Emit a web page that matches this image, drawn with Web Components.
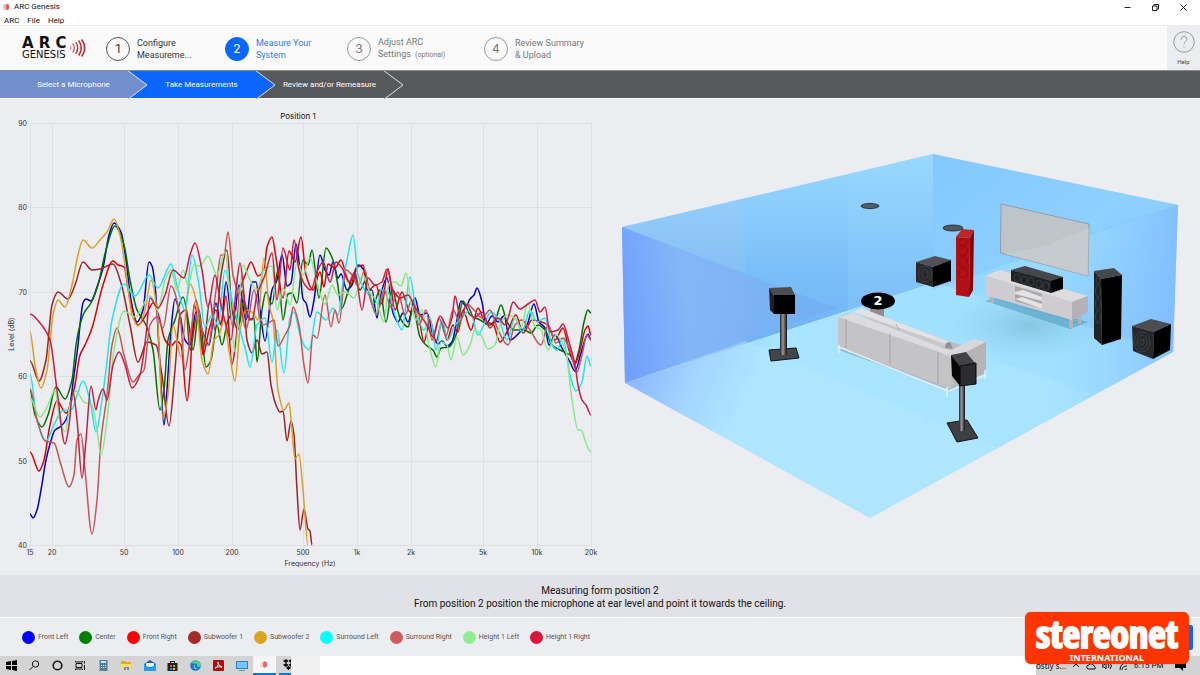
<!DOCTYPE html>
<html lang="en">
<head>
<meta charset="utf-8">
<meta name="viewport" content="width=device-width, initial-scale=1">
<title>ARC Genesis</title>
<style>
body { margin: 0; background: #fff; font-family: Roboto, "Liberation Sans", sans-serif; color: #222; }
</style>
</head>
<body>
<arc-app></arc-app>
<script>
const define = (name, html, setup) => customElements.define(name, class extends HTMLElement {
  constructor() {
    super();
    this.attachShadow({ mode: 'open' });
    const t = document.createElement('template');
    t.innerHTML = '<style>*{box-sizing:border-box}button{font:inherit;color:inherit;border:0;padding:0;margin:0;background:none}:host{display:block}</style>' + html;
    this.shadowRoot.append(t.content.cloneNode(true));
    if (setup) setup(this.shadowRoot, this);
  }
});

/* Window title and menu */
define('title-bar', `
<style>
:host { background: #fff; font-size: 8px; line-height: 12px; color: #111; }
.title { display: flex; align-items: center; height: 14px; padding: 0 3px; }
.title svg.app { margin-right: 4px; }
.title span { flex: 1; }
.title button { width: 28px; height: 14px; display: grid; place-items: center; }
nav { display: flex; gap: 8px; height: 12px; padding-left: 4px; border-bottom: 1px solid #ececec; }
nav button { line-height: 13px; height: 11px; }
</style>
<div class="title">
  <svg class="app" width="7" height="8" viewBox="0 0 7 8"><ellipse cx="3" cy="4" rx="3" ry="3" fill="#f2b5b5"/><ellipse cx="4.500" cy="4" rx="1.500" ry="3" fill="#d9585e"/></svg>
  <span>ARC Genesis</span>
  <button aria-label="Minimize"><svg width="9" height="9" viewBox="0 0 9 9"><path d="M1.500 4.500h6" stroke="#222"/></svg></button>
  <button aria-label="Restore"><svg width="9" height="9" viewBox="0 0 9 9" fill="none" stroke="#222"><path d="M1.500 3h4.500v4.500H1.500zM3 3V1.500h4.500V6H6"/></svg></button>
  <button aria-label="Close"><svg width="9" height="9" viewBox="0 0 9 9"><path d="M1.500 1.500l6 6M7.500 1.500l-6 6" stroke="#222"/></svg></button>
</div>
<nav><button>ARC</button><button>File</button><button>Help</button></nav>`);

define('arc-logo', `
<style>
:host { display: flex; align-items: center; color: #111; font-family: "DejaVu Sans", sans-serif; }
.words { display: grid; }
b { font-size: 15px; line-height: 13px; }
span { font-size: 10px; line-height: 10px; }
svg { margin-left: 2px; }
</style>
<div class="words"><b>A R C</b><span>GENESIS</span></div>
<svg width="17" height="20" viewBox="0 0 17 20" fill="none" stroke="#c9252c" stroke-linecap="round">
<path d="M1.500 8q1.500 2 0 4" stroke="#e07b80"/><path d="M4 6q2.500 4 0 8" stroke-width="1.200" stroke="#d5484e"/><path d="M7 4.500q3.500 5.500 0 11" stroke-width="1.300"/><path d="M10 3q4.500 7 0 14" stroke-width="1.500"/><path d="M13 2q5.500 8 0 16" stroke-width="1.600"/></svg>`);

define('step-item', `
<style>
button { display: flex; align-items: center; gap: 7px; text-align: left; font-size: 9px; line-height: 12px; color: #333; }
i { width: 24px; height: 24px; border: 1px solid #555; border-radius: 50%; display: grid; place-items: center; font: 12px Inter, sans-serif; flex: none; }
:host([todo]) button { color: #777; } :host([todo]) i { border-color: #999; }
:host([current]) button { color: #2e7bea; } :host([current]) i { background: #0a66ff; border-color: #0a66ff; color: #fff; }
</style>
<button><i></i><span><slot></slot></span></button>`, (r, el) => { r.querySelector('i').textContent = el.getAttribute('n'); });

define('step-header', `
<style>
:host { display: flex; height: 44px; background: #fafafa; align-items: center; }
arc-logo { width: 106px; padding-left: 22px; flex: none; }
.steps { flex: 1; display: grid; grid-template-columns: 119px 122px 137px auto; align-items: center; padding-top: 1px; }
small { font-size: 7px; margin-left: 2px; }
.help { width: 33px; height: 44px; background: #ecedf1; display: grid; justify-items: center; align-content: center; gap: 5px; font-size: 6px; line-height: 8px; color: #444; }
</style>
<arc-logo></arc-logo>
<div class="steps">
<step-item n="1">Configure<br>Measureme...</step-item>
<step-item n="2" current>Measure Your<br>System</step-item>
<step-item n="3" todo>Adjust ARC<br>Settings <small>(optional)</small></step-item>
<step-item n="4" todo>Review Summary<br>&amp; Upload</step-item>
</div>
<button class="help"><svg width="22" height="22" viewBox="0 0 22 22" fill="none" stroke="#999"><circle cx="11" cy="11" r="10.300"/><path d="M8.200 8.600q0-3.200 2.900-3.200t2.800 2.800q0 1.500-1.500 2.500T11 13.300"/><path d="M11 15.200v1.400"/></svg>Help</button>`);

define('crumb-step', `
<style>
:host { position: relative; flex: none; width: 128px; color: #fff; }
button { width: 100%; height: 100%; padding-left: 19px; background: var(--c); font-size: 8px; white-space: nowrap; }
svg { position: absolute; left: 128px; top: 0; z-index: 1; }
path { fill: var(--c); stroke: #dfe3ea; }
</style>
<button><slot></slot></button><svg width="20" height="28" viewBox="0 0 20 28"><path d="M-1 -1L19 14L-1 29"/></svg>`);

define('crumb-nav', `
<style>
:host { display: flex; height: 29px; background: #58595b; border-bottom: 1px solid #fff; border-top: 1px solid #8a8b8d; }
crumb-step:nth-of-type(1) { --c: #708fcb; z-index: 3; }
crumb-step:nth-of-type(2) { --c: #0a66ff; z-index: 2; }
crumb-step:nth-of-type(3) { --c: #58595b; z-index: 1; }
</style>
<crumb-step>Select a Microphone</crumb-step><crumb-step>Take Measurements</crumb-step><crumb-step>Review and/or Remeasure</crumb-step>`);

/* Frequency response plot: every trace is a list of x,y pairs in plot units */
const traces = [
['#0000c8','30,514 33,518 37,510 41,490 46,460 50,444 55,430 60,427 66,420 70,405 74,375 78,345 80,325 83,303 86,299 91,301 97,287 103,268 109,235 114,223 121,232 126,260 131,300 137,322 143,310 149,262 152,266 155,285 160,365 164,425 167,390 171,330 175,299 180,315 185,340 190,345 196,312 202,330 209,345 216,303 221,325 226,282 233,327 239,285 246,320 252,282 256,282 260,310 265,341 272,290 277,280 282,255 287,286 291,283 296,244 300,270 303,299 306,303 310,317 314,300 320,255 325,270 329,275 333,262 338,278 341,274 347,290 352,285 358,265 364,270 367,290 372,290 377,318 380,298 387,278 393,313 398,322 403,313 408,322 415,298 420,315 427,313 433,335 438,344 442,341 447,346 452,342 457,320 461,301 466,306 470,299 474,295 477,288 482,302 486,324 492,316 498,322 504,316 510,340 520,332 527,325 534,304 539,322 545,328 549,345 555,335 562,348 570,362 575,371 581,353 586,337 588,334 591,340'],
['#007000','30,390 35,415 42,427 48,415 56,387 65,399 72,380 76,345 80,325 84,313 91,303 98,285 106,250 115,226 124,245 130,280 137,310 146,325 153,350 160,410 164,390 168,340 175,320 183,297 189,325 193,350 199,310 206,367 211,360 217,325 222,345 228,320 234,312 239,325 244,300 249,320 254,318 257,362 262,310 266,292 272,304 278,270 283,320 288,294 292,293 297,303 303,260 308,265 312,250 319,298 326,248 333,260 337,280 342,308 347,295 354,275 360,290 366,280 373,305 380,290 386,322 392,290 400,318 408,327 413,308 420,337 426,345 433,350 437,357 441,348 449,347 456,335 463,301 470,315 480,320 490,325 496,318 501,305 507,322 514,330 524,330 531,333 538,325 545,330 552,345 560,350 570,355 575,362 579,350 584,322 588,310 591,313'],
['#e00000','30,452 39,471 44,460 50,425 57,401 66,413 74,390 80,355 85,345 92,328 103,285 113,261 118,265 124,267 130,300 138,325 147,313 153,303 159,317 165,340 171,346 176,341 181,345 187,401 190,375 194,305 200,330 203,355 209,330 216,310 221,325 226,296 232,364 236,340 240,290 246,273 251,262 258,276 264,270 267,247 272,237 276,258 283,298 289,251 295,262 301,237 306,275 313,290 320,272 324,287 328,264 335,268 341,260 347,278 351,285 356,268 363,265 368,290 376,285 382,304 388,269 395,310 402,292 410,312 417,310 424,342 430,320 436,342 442,322 447,340 453,325 458,332 463,310 471,330 478,308 485,322 493,324 500,342 508,330 516,315 523,333 532,320 541,322 548,325 555,340 563,328 569,350 575,364 580,350 585,330 588,326 591,335'],
['#9c2424','30,361 39,381 46,360 52,305 58,292 68,299 75,285 83,262 92,270 100,269 113,264 121,283 130,325 138,362 147,342 156,345 162,375 169,426 175,370 180,315 186,310 190,350 197,315 203,350 210,300 215,330 221,275 227,250 232,310 238,330 243,290 247,340 252,353 257,340 262,354 267,352 271,385 276,405 280,412 283,411 287,441 291,421 294,435 297,490 300,530 304,509 308,529 310,531 312,545'],
['#d9a028','30,332 35,365 41,388 47,370 53,315 58,300 65,307 72,285 78,255 83,240 92,248 100,240 107,232 114,219 120,235 127,280 132,315 138,326 145,310 151,280 157,310 163,419 168,395 173,325 181,357 187,300 190,284 196,300 202,360 208,374 214,340 219,335 224,320 229,350 235,381 240,330 246,310 252,312 258,320 264,258 269,305 273,320 278,390 284,410 289,403 292,430 295,459 299,454 303,490 308,545'],
['#20e4f0','30,374 37,420 46,441 54,425 62,411 72,409 77,395 83,381 90,400 96,432 102,400 106,370 112,320 124,284 135,296 149,275 158,288 171,264 178,290 185,310 192,255 199,285 205,327 212,315 218,325 225,270 232,300 240,330 246,352 250,367 257,325 265,318 272,362 277,330 284,373 290,318 294,312 300,335 304,345 309,350 317,312 326,320 333,308 338,315 343,282 348,255 353,235 358,275 365,290 371,298 376,315 381,290 388,292 395,315 402,330 410,277 416,310 424,330 430,318 436,350 442,320 448,340 455,325 462,318 470,310 478,335 485,322 491,312 499,320 507,340 515,318 522,332 530,310 537,322 545,318 552,345 557,350 563,338 570,375 576,391 582,382 587,356 591,366'],
['#c45656','30,389 37,420 45,441 54,443 61,465 69,487 74,475 77,440 81,434 85,470 92,534 97,500 101,440 107,395 112,345 117,328 124,355 133,382 139,375 144,370 150,325 157,317 163,328 171,286 180,315 185,370 190,340 196,300 202,330 208,345 216,290 221,255 224,255 228,232 233,275 240,300 246,330 254,290 262,325 270,322 274,320 278,346 285,335 290,325 293,307 299,325 304,365 308,383 313,335 317,338 325,295 331,327 335,310 339,323 346,270 352,275 358,286 365,270 370,298 377,315 384,290 391,307 398,292 405,315 412,300 419,325 426,310 432,340 439,318 446,336 453,310 460,322 467,304 474,310 482,318 490,310 498,330 508,345 515,325 522,320 530,330 541,345 548,325 556,343 563,338 570,350 577,372 582,355 587,335 591,340'],
['#88e888','30,398 40,417 48,405 55,390 60,420 65,432 70,405 76,391 84,402 92,405 97,430 101,455 107,420 114,350 124,311 135,317 150,296 158,310 165,280 171,270 177,290 183,270 188,285 194,265 200,266 208,256 217,275 225,252 231,310 235,352 243,265 250,280 257,290 264,270 272,266 277,310 283,288 290,305 297,262 303,275 310,258 318,287 325,304 332,285 338,295 345,292 354,298 363,275 370,293 376,300 384,322 389,283 395,282 401,286 406,273 411,302 416,320 422,310 429,345 436,367 441,342 447,345 451,360 457,337 463,355 470,345 475,330 481,335 488,349 495,345 500,325 507,315 515,318 521,328 528,303 534,325 541,330 548,350 556,335 566,352 572,400 578,430 581,430 586,443 591,452'],
['#cc1c40','30,314 40,323 50,340 57,390 65,444 69,425 73,392 77,420 82,478 86,440 91,386 96,410 98,401 103,389 107,400 113,365 119,352 125,365 132,388 140,375 146,335 150,298 158,308 165,295 173,270 184,278 190,255 195,243 202,270 208,307 215,275 220,300 226,325 231,340 236,290 240,263 246,310 252,320 257,295 265,275 272,253 277,300 283,248 290,270 294,240 299,270 305,285 311,290 317,272 323,262 330,282 336,262 342,268 349,282 355,272 362,310 368,278 375,285 382,282 387,269 393,290 400,298 408,295 415,307 420,315 427,325 433,337 440,316 448,328 452,318 455,296 460,315 467,305 474,318 482,312 490,328 498,318 505,325 509,315 513,302 520,309 528,304 535,300 540,312 545,307 550,332 558,330 563,324 569,342 575,365 578,385 582,400 586,405 591,415']
];
const smooth = pts => {
  const p = pts.split(' ').map(s => s.split(',').map(Number));
  const slope = i => {
    if (i < 1 || i > p.length - 2) return 0;
    const a = (p[i][1] - p[i-1][1]) / (p[i][0] - p[i-1][0]), b = (p[i+1][1] - p[i][1]) / (p[i+1][0] - p[i][0]);
    return a * b <= 0 ? 0 : 2 * a * b / (a + b);
  };
  let d = 'M' + p[0];
  for (let i = 1; i < p.length; i++) {
    const h = (p[i][0] - p[i-1][0]) / 3;
    d += `C${p[i-1][0] + h},${p[i-1][1] + h * slope(i-1)} ${p[i][0] - h},${p[i][1] - h * slope(i)} ${p[i]}`;
  }
  return d;
};
define('response-chart', `
<style>
svg { display: block; width: 100%; height: auto; }
text { font: 7px Inter, sans-serif; fill: #333; }
.t { font-size: 8px; fill: #111; }
</style>
<svg viewBox="0 99 610 476" role="img" aria-label="Level against frequency, position 1">
<g id="grid" stroke="#dfe0e2"></g><g id="lines" fill="none" stroke-width="1.500" stroke-linejoin="round"></g>
<g id="labels"></g>
<text class="t" x="298" y="119" text-anchor="middle">Position 1</text>
<text x="310" y="566" text-anchor="middle">Frequency (Hz)</text>
<text transform="translate(14 334) rotate(-90)" text-anchor="middle">Level (dB)</text>
</svg>`, r => {
  const xs = [[30,'15'],[52,'20'],[124,'50'],[178,'100'],[232,'200'],[303,'500'],[357,'1k'],[411,'2k'],[483,'5k'],[537,'10k'],[591,'20k']];
  const ys = [[123,'90'],[207,'80'],[292,'70'],[376,'60'],[461,'50'],[545,'40']];
  r.getElementById('grid').innerHTML = xs.map(([x]) => `<path d="M${x + .5} 123V547"/>`).join('') + ys.map(([y]) => `<path d="M28 ${y + .5}H591"/>`).join('');
  r.getElementById('labels').innerHTML = xs.map(([x, t]) => `<text x="${x}" y="555" text-anchor="middle">${t}</text>`).join('') + ys.map(([y, t]) => `<text x="27" y="${y + 3}" text-anchor="end">${t}</text>`).join('');
  r.getElementById('lines').innerHTML = traces.map(([c, p]) => `<path stroke="${c}" d="${smooth(p)}"/>`).join('');
});

/* Listening room illustration */
define('room-view', `
<style>svg { display: block; width: 100%; height: auto; } text { font: 600 13px "DejaVu Sans", sans-serif; fill: #fff; }</style>
<svg viewBox="610 99 590 476" role="img" aria-label="Listening room with speaker and microphone positions">
<defs>
<linearGradient id="lw" x1="0" y1="0" x2="0" y2="1"><stop offset="0" stop-color="#97d8ff"/><stop offset=".55" stop-color="#79bdf8"/><stop offset="1" stop-color="#69acf3"/></linearGradient>
<linearGradient id="rw" x1="0" y1="0" x2="1" y2="1"><stop offset="0" stop-color="#87ccff"/><stop offset=".5" stop-color="#98daff"/><stop offset="1" stop-color="#87c4ff"/></linearGradient>
<linearGradient id="nw" gradientUnits="userSpaceOnUse" x1="622" y1="310" x2="840" y2="290"><stop offset="0" stop-color="#6f9bff"/><stop offset=".3" stop-color="#84b5f8"/><stop offset="1" stop-color="#70acf1"/></linearGradient>
<linearGradient id="fl" gradientUnits="userSpaceOnUse" x1="640" y1="385" x2="735" y2="425"><stop offset="0" stop-color="#78a3ff"/><stop offset=".45" stop-color="#96c9ff"/><stop offset="1" stop-color="#a8e3ff"/></linearGradient>
<linearGradient id="fr" gradientUnits="userSpaceOnUse" x1="1050" y1="330" x2="1178" y2="330"><stop offset="0" stop-color="#92d4ff" stop-opacity="0"/><stop offset="1" stop-color="#80b9ff" stop-opacity=".8"/></linearGradient>
<radialGradient id="sh"><stop offset="0" stop-color="#5f9fb8" stop-opacity=".4"/><stop offset="1" stop-color="#79c4e0" stop-opacity="0"/></radialGradient>
<linearGradient id="pole"><stop offset="0" stop-color="#222"/><stop offset=".4" stop-color="#999"/><stop offset="1" stop-color="#111"/></linearGradient>
</defs>
<path fill="url(#lw)" d="M622 227L933 154V283L625 383z"/>
<path fill="url(#rw)" d="M933 154L1178 205L1173 352L933 283z"/>
<path fill="#a9c9ef" fill-opacity=".25" d="M622 227L745 198V343L625 383z"/>
<path fill="#a1dcff" fill-opacity=".2" d="M848 174L933 154V283L848 310z"/>
<path fill="url(#nw)" fill-opacity=".85" d="M622 227L836 308L625 383z"/>
<path fill="url(#fl)" d="M625 383L933 283L1173 352L870 518z"/>
<path fill="#96d9ff" fill-opacity=".35" d="M848 310L933 283L1173 352L1093 394z"/>
<path fill="#bceaff" fill-opacity=".35" d="M745 341L998 448L870 518L625 383z"/>
<path fill="url(#fr)" d="M933 283L1178 205L1173 352L1020 436z"/>
<path fill="#7cc4ff" fill-opacity=".4" d="M933 154L1178 205L933 290z"/>
<ellipse cx="1030" cy="325" rx="80" ry="35" fill="url(#sh)"/>
<g stroke="#222" stroke-width=".8"><ellipse cx="870" cy="206" rx="9" ry="2.600" fill="#555b62"/><ellipse cx="953" cy="228" rx="10" ry="3" fill="#4e5962"/></g>
<path d="M1001 204L1089 224L1088 276L1000.500 253z" fill="#bec5ca" stroke="#929da5"/><path d="M1089 228L1045 246L1005 254L1088 276z" fill="#c8d1d4" fill-opacity=".6"/>
<path d="M985 301L1070 329L1088 322L1070 317L1000 296z" fill="#519fbd" opacity=".6"/>
<g fill="#b5b3b6"><path d="M990 294h4v9h-4zM1069 318h4v10h-4zM1078 315h3v9h-3z"/></g>
<path d="M985 276L1000 270L1088 296L1072 302z" fill="#dedcdd"/>
<path d="M985 276L1072 302V320L985 295z" fill="#cfcccf"/><path d="M1072 302L1088 296V312L1072 320z" fill="#b4b2b5"/>
<path d="M1015 286L1042 294V309L1015 301z" fill="#aaa7aa"/><path d="M1015 292L1023 290L1042 297V301L1015 294zM1015 299L1022 297L1042 304V309z" fill="#e4e2e3"/>
<path d="M1011 270L1025 266L1063 277L1051 283z" fill="#45474a"/><path d="M1011 270L1051 281V293L1011 281z" fill="#202123"/><path d="M1051 281L1063 277V289L1051 293z" fill="#050505"/>
<g fill="none" stroke="#444649" stroke-width=".8"><ellipse cx="1017" cy="278" rx="3" ry="4"/><ellipse cx="1024" cy="280" rx="3" ry="4"/><ellipse cx="1031" cy="281.500" rx="3" ry="4"/><ellipse cx="1039" cy="284" rx="3" ry="4"/><ellipse cx="1046" cy="286" rx="3" ry="4"/></g>
<path d="M916 262L935 256L951 260L933 267z" fill="#505256"/><path d="M916 262L933 267V287L916 282z" fill="#28292c"/><path d="M933 267L951 260V281L933 287z" fill="#000"/>
<g fill="none" stroke="#444649" stroke-width=".8"><ellipse cx="925" cy="274" rx="6.500" ry="8"/><ellipse cx="925" cy="274" rx="3" ry="4.500"/></g>
<path d="M956 237L962 229L974 230L970 238z" fill="#bd2729"/><path d="M956 237L970 238L969 297L956 295z" fill="#b31015"/><path d="M970 238L974 230L973 290L969 297z" fill="#8d0006"/>
<g fill="none" stroke="#920b10"><circle cx="963" cy="242" r="3.500"/><ellipse cx="963" cy="251" rx="4.500" ry="5"/><ellipse cx="963" cy="262" rx="4.500" ry="5"/><ellipse cx="963" cy="273" rx="4.500" ry="5"/></g>
<path d="M1094 271L1114 268L1122 275L1101 279z" fill="#45474a"/><path d="M1094 271L1101 279L1102 345L1094 338z" fill="#222326"/><path d="M1101 279L1122 275L1121 339L1102 345z" fill="#000"/>
<g fill="none" stroke="#444649" stroke-width=".8"><ellipse cx="1098" cy="280" rx="2" ry="4"/><ellipse cx="1098" cy="291" rx="2.500" ry="6"/><ellipse cx="1098" cy="304" rx="2.500" ry="6"/><ellipse cx="1098" cy="317" rx="2.500" ry="6"/></g>
<path d="M1132 326L1151 319L1171 324L1154 332z" fill="#4b4d50"/><path d="M1132 326L1154 332L1153 359L1133 351z" fill="#27282b"/><path d="M1154 332L1171 324L1170 350L1153 359z" fill="#000"/>
<g fill="none" stroke="#444649" stroke-width=".8"><ellipse cx="1142" cy="342" rx="8" ry="10"/><ellipse cx="1142" cy="342" rx="5" ry="7"/><ellipse cx="1142" cy="342" rx="2" ry="3"/></g>
<path d="M839 350L950 390L985 373L975 370L870 340z" fill="#64a7bf" opacity=".6"/>
<path d="M870 308h14v10l-14-2z" fill="#8e8c91"/>
<path d="M838 317L848 313L965 346L985 341L986 373L948 389L838 346z" fill="#bcbbbd"/>
<path d="M838 317L852 313L955 352L943 357z" fill="#dcdbdd"/><path d="M853 312L861 308L950 342L952 350L945 349z" fill="#c8c7ca"/><path d="M853 312L861 308L950 342L946 344z" fill="#e2e1e3"/><path d="M946 343l4-1 3 7-8-1z" fill="#939195"/>
<path d="M838 317L951 356V389L838 346z" fill="#c4c3c5"/><path d="M943 354L974 339L986 342L955 358z" fill="#d8d7d9"/><path d="M955 358L986 342V373L955 385z" fill="#b6b4b7"/>
<path d="M846 319v29M890 333v32M938 352v32M896 324l3 6" stroke="#9b9a9d" stroke-width=".7" fill="none"/>
<path d="M839 345v8M839 347L948 391M947 387v10M985 370v9M949 391L985 375" stroke="#ececef" stroke-width="1.500" fill="none"/>
<ellipse cx="878" cy="301" rx="17" ry="8.500" fill="#000"/><text x="878" y="305" text-anchor="middle">2</text>
<path d="M769 350L796 348L799 358L771 361z" fill="#444649" stroke="#111"/><path d="M780 314h7v41h-7z" fill="url(#pole)"/><path d="M769 288L791 287L795 295L774 296z" fill="#4b4d50"/><path d="M769 288L774 296V314L770 310z" fill="#202124"/><path d="M774 295H795V314H774z" fill="#000"/>
<path d="M947 423L967 420L978 438L957 442z" fill="#3d3f42" stroke="#111"/><path d="M959 384h6v47h-6z" fill="url(#pole)"/><path d="M951 355L966 352L975 363L960 366z" fill="#414246"/><path d="M951 355L960 366V386L952 376z" fill="#060606"/><path d="M960 366L976 363V384L960 386z" fill="#2b2b30" stroke="#08080a"/>
</svg>`);

define('message-bar', `
<style>
:host { height: 43px; padding-top: 2px; background: #e1e2e7; border-bottom: 1px solid #fff; display: grid; place-content: center; text-align: center; font-size: 10px; line-height: 13px; color: #111; }
p { margin: 0; }
</style>
<p><slot></slot></p>`);

define('chart-legend', `
<style>
:host { height: 38px; background: #ecedf1; display: flex; align-items: center; justify-content: space-between; padding: 0 7px 0 22px; }
ul { list-style: none; margin: 0; padding: 0; display: flex; gap: 11px; font-size: 7px; line-height: 14px; color: #555; }
li { display: flex; align-items: center; gap: 3px; }
i { width: 13px; height: 13px; border-radius: 50%; background: var(--c); }
button { width: 60px; height: 25px; background: #0a66ff; border-radius: 2px; }
</style>
<ul></ul><button aria-label="Continue"></button>`, r => {
  const items = { 'Front Left': '#00f', Center: 'green', 'Front Right': 'red', 'Subwoofer 1': 'brown', 'Subwoofer 2': 'goldenrod', 'Surround Left': 'cyan', 'Surround Right': 'indianred', 'Height 1 Left': 'lightgreen', 'Height 1 Right': 'crimson' };
  r.querySelector('ul').innerHTML = Object.entries(items).map(([k, c]) => `<li><i style="--c:${c}"></i>${k}</li>`).join('');
});

define('task-bar', `
<style>
:host { display: flex; justify-content: space-between; height: 19px; background: #fff; }
.apps { display: flex; width: 320px; background: linear-gradient(90deg, #d4d4d5 291px, #f0f0f1 291px); }
.apps button { width: 23px; display: grid; place-items: center; flex: none; }
.apps button.on { background: #f6f6f7; border-bottom: 2px solid #0a78d7; }
.apps button.half { width: 12px; margin-left: 3px; justify-items: start; padding-left: 4px; overflow: hidden; border-bottom: 2px solid #0a78d7; }
.tray { width: 164px; background: #d2d2d3; display: flex; align-items: center; gap: 6px; font: 8px "Noto Sans", sans-serif; color: #111; white-space: nowrap; }
.tray time { font-family: Roboto, sans-serif; } .tray .note { margin-left: 5px; }
</style>
<div class="apps">
<button aria-label="Start"><svg width="11" height="11" viewBox="0 0 11 11"><path d="M0 2l5-1v4H0zM6 1l5-1v5H6zM0 6h5v4L0 9zM6 6h5v5l-5-1z"/></svg></button>
<button aria-label="Search"><svg width="11" height="11" viewBox="0 0 11 11" fill="none" stroke="#111"><circle cx="6.500" cy="4" r="3.200"/><path d="M4 6.500L.5 10"/></svg></button>
<button aria-label="Cortana"><svg width="11" height="11" viewBox="0 0 11 11" fill="none" stroke="#111" stroke-width="1.600"><circle cx="5.500" cy="5.500" r="4.300"/></svg></button>
<button aria-label="Task view"><svg width="11" height="11" viewBox="0 0 11 11" fill="none" stroke="#111"><path d="M1 3.500h6v4H1zM.5 1v1h7V1M.5 10V9h7v1M9.500 1v2.500M9.500 5v5"/></svg></button>
<button aria-label="Calculator"><svg width="11" height="11" viewBox="0 0 11 11"><path fill="#547d96" d="M1.500 0h8v11h-8z"/><path fill="#bfe7f6" d="M3 1h5v2H3zM3 5h1v1H3zM5 5h1v1H5zM7 5h1v1H7zM3 7h1v1H3zM5 7h1v1H5zM7 7h1v1H7z"/></svg></button>
<button aria-label="Files"><svg width="11" height="11" viewBox="0 0 11 11"><path fill="#e8a91c" d="M0 1h4l1 1h5v3H0z"/><path fill="#ffd969" d="M0 4h11v6H0z"/><path fill="#4a9bd4" d="M3 7h5v3H6V8H5v2H3z"/></svg></button>
<button aria-label="Mail"><svg width="12" height="11" viewBox="0 0 12 11"><path fill="#0b66ae" d="M0 4l6-4 6 4v6H0z"/><path fill="#e9f5fd" d="M2 3h8v4H2z"/><path fill="#279be4" d="M0 4l6 4 6-4v7H0z"/></svg></button>
<button aria-label="Store"><svg width="11" height="11" viewBox="0 0 11 11"><path d="M.5 3h10v8H.5zM3 3V1h5v2H7V2H4v1z" fill="#222"/><path fill="#f25022" d="M3 5h2v2H3z"/><path fill="#7fba00" d="M6 5h2v2H6z"/><path fill="#00a4ef" d="M3 8h2v2H3z"/><path fill="#ffb900" d="M6 8h2v2H6z"/></svg></button>
<button aria-label="Edge"><svg width="11" height="11" viewBox="0 0 11 11"><circle cx="5.500" cy="5.500" r="5.300" fill="#157bc4"/><path fill="#49cf91" d="M1 3a5.300 5.300 0 0 1 9.800 2.500q-1 2-3.800 1.500Q8 4 5 3.500T1 3z"/><path fill="#e2f6fa" d="M5 5q-2 3 3 4Q4 9.500 4 7t1-2z"/></svg></button>
<button aria-label="Reader"><svg width="11" height="11" viewBox="0 0 11 11"><rect width="11" height="11" rx="1" fill="#b30b0b"/><path d="M2 8q4-1 3-6 0 4 4 5Q5 6 2 8z" fill="none" stroke="#fff" stroke-width=".9"/></svg></button>
<button aria-label="Computer"><svg width="12" height="11" viewBox="0 0 12 11"><path fill="#2d81bd" d="M0 1h12v8H0z"/><path fill="#72c8fa" d="M1 2h10v6H1z"/><path fill="#7d8b94" d="M3 10h6v1H3z"/></svg></button>
<button class="on" aria-label="ARC Genesis"><svg width="9" height="9" viewBox="0 0 9 9"><circle cx="4" cy="4.500" r="3.500" fill="#fad0d0"/><ellipse cx="5" cy="4.500" rx="2" ry="3" fill="#e3656b"/></svg></button>
<button class="half" aria-label="Dropbox"><svg width="11" height="11" viewBox="0 0 11 11"><path d="M3 0l2.500 2L3 4 0 2zM8 0l3 2-3 2-2.500-2zM3 4l2.500 2L3 8 0 6zM8 4l3 2-3 2-2.500-2zM5.500 7L8 9l-2.500 2L3 9z"/></svg></button>
</div>
<div class="tray"><span>ostly s...</span>
<svg width="8" height="8" viewBox="0 0 8 8" fill="none" stroke="#111"><path d="M1 5l3-3 3 3"/></svg>
<svg width="10" height="8" viewBox="0 0 10 8" fill="none" stroke="#111"><path d="M2 7Q0 6 1 4q1-1 2-1 1-2 3-1t2 2q2 1 1 3z"/></svg>
<svg width="11" height="8" viewBox="0 0 11 8" fill="none" stroke="#111"><path d="M0 3h2l2-2v6L2 5H0zM6 2q2 2 0 4M8 1q3 3 0 6"/></svg>
<svg width="9" height="8" viewBox="0 0 9 8" fill="none" stroke="#111"><path d="M1 8Q1 1 8 1M3 8q0-4 5-4M6 8q0-1 2-1"/></svg>
<time>6:15 PM</time>
<svg class="note" width="11" height="10" viewBox="0 0 11 10"><path d="M0 0h11v7H8v3L5 7H0z"/></svg></div>`);

define('brand-badge', `
<style>
:host { position: absolute; right: 11px; bottom: 11px; z-index: 5; width: 164px; height: 52px; border-radius: 6px; background: #ff3500; color: #fff; display: grid; justify-items: center; align-content: center; box-shadow: 0 0 1px #a44; }
b { font: 700 38px/39px "Liberation Sans Narrow", "Open Sans Condensed", Roboto, sans-serif; -webkit-text-stroke: 2px #fff; } span { font: 700 9px/10px "Noto Sans", sans-serif; }
</style>
<b>stereonet</b><span>INTERNATIONAL</span>`);

define('arc-app', `
<style>
:host { position: relative; background: #ecedf1; }
main { display: grid; grid-template-columns: 61fr 59fr; }
</style>
<title-bar></title-bar><step-header></step-header><crumb-nav></crumb-nav>
<main><response-chart></response-chart><room-view></room-view></main>
<message-bar>Measuring form position 2<br>From position 2 position the microphone at ear level and point it towards the ceiling.</message-bar>
<chart-legend></chart-legend><task-bar></task-bar><brand-badge></brand-badge>`);
</script>
</body>
</html>
